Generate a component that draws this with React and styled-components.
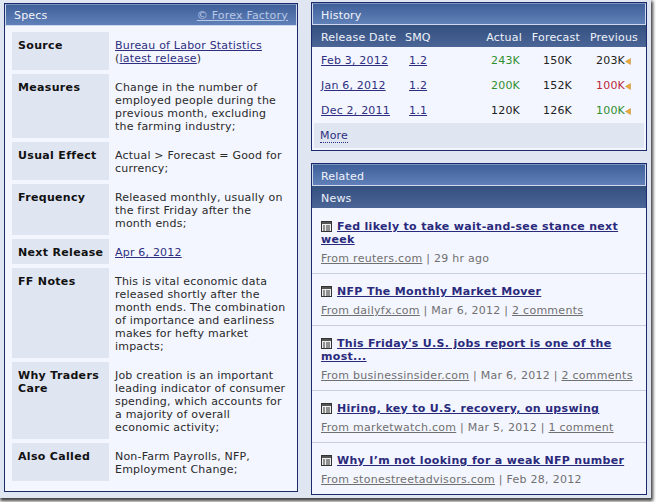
import { Fragment } from "react";
import styled, { createGlobalStyle } from "styled-components";

const GlobalStyle = createGlobalStyle`
    html, body {
        margin: 0;
        padding: 0;
        background: #fff;
    }
    body {
        font-family: "DejaVu Sans", Verdana, sans-serif;
        font-size: 11px;
        line-height: 13px;
        letter-spacing: 0.2px;
        color: #222;
        overflow: hidden;
    }
`

const Frame = styled.div`
    width: 656px;
    height: 502px;
    background: #fff;
    overflow: hidden;
`

const Page = styled.div`
    width: 651px;
    height: 498px;
    box-sizing: border-box;
    padding: 2px 0 0 4px;
    background: #e0e5f2;
    box-shadow: 1px 2px 3px 1px rgba(30, 30, 30, 0.85);
    display: grid;
    grid-template-columns: 294px 336px;
    column-gap: 13px;
    align-items: start;
`

const Column = styled.div`
    display: flex;
    flex-direction: column;
    gap: 12px;
`

const Panel = styled.section`
    border: 1px solid #1b2a6b;
    background: #f4f6ff;
    box-sizing: border-box;
    margin-top: ${(p) => p.$offset || "0"};
    overflow: hidden;
`

const PanelHead = styled.div`
    box-sizing: border-box;
    height: 22px;
    padding: ${(p) => (p.$low ? "2px" : "0")} 8px 0 8px;
    display: flex;
    justify-content: space-between;
    align-items: center;
    color: #f1f4fb;
    background: linear-gradient(#40609a, #6080b8);
    border: 1px solid #cfd8ec;
    border-top-color: #7a92bf;
`

const HeadLink = styled.a`
    color: #b8c8e6;
    text-decoration: underline;
`

const SubHead = styled.div`
    box-sizing: border-box;
    height: 22px;
    padding: 2px 8px 0 9px;
    display: flex;
    align-items: center;
    color: #eef2fa;
    background: linear-gradient(#34507f, #4a6596);
`

const SpecGrid = styled.div`
    padding: 6px 7px 10px 7px;
    display: grid;
    grid-template-columns: 97px 1fr;
    row-gap: 4px;
`

const SpecLabel = styled.div`
    background: #e0e5f2;
    padding: 7px 0 5px 6px;
    font-weight: bold;
    letter-spacing: 0.33px;
    color: #111;
    white-space: nowrap;
`

const SpecValue = styled.div`
    padding: 7px 6px 5px 6px;
    color: #2a2a2a;
    white-space: nowrap;
`

const TextLink = styled.a`
    color: #2e2f80;
    text-decoration: underline;
`

const HistoryHead = styled(SubHead)`
    display: grid;
    grid-template-columns: 84px 40px 1fr 58px 58px;
`

const HeadCell = styled.div`
    text-align: ${(p) => p.$align || "left"};
    white-space: nowrap;
`

const HistoryBody = styled.div`
    padding-top: 1px;
`

const HistoryRow = styled.div`
    height: 25px;
    padding: 0 8px 0 9px;
    display: grid;
    grid-template-columns: 88px 36px 1fr 60px 57px;
    align-items: center;
`

const Cell = styled.div`
    text-align: ${(p) => p.$align || "left"};
    white-space: nowrap;
    color: ${(p) => p.$color || "#222"};
    padding-right: ${(p) => p.$pr || "0"};
`

const Revised = styled.svg`
    width: 6px;
    height: 7px;
    vertical-align: -1px;
`

const MoreBar = styled.div`
    margin: 0 2px 2px 2px;
    height: 25px;
    padding: 0 6px;
    display: flex;
    align-items: center;
    background: #e0e5f2;
`

const MoreLink = styled.a`
    color: #2e2f80;
    text-decoration: none;
    border-bottom: 1px dotted #2e2f80;
`

const NewsItem = styled.div`
    padding: 11px 8px 8px 9px;
    border-top: 1px solid ${(p) => (p.$first ? "transparent" : "#c8cfe2")};
`

const NewsTitle = styled.a`
    color: #2a2a7c;
    font-weight: bold;
    letter-spacing: 0.32px;
    text-decoration: underline;
`

const NewsMeta = styled.div`
    margin-top: 6px;
    color: #707070;
    letter-spacing: 0.27px;
`

const MetaLink = styled.a`
    color: #707070;
    text-decoration: underline;
`

const NewsGlyph = styled.svg`
    width: 11px;
    height: 11px;
    margin-right: 5px;
    vertical-align: -2px;
`

const specs = [
    { label: "Source", value: <><TextLink>Bureau of Labor Statistics</TextLink><br />(<TextLink>latest release</TextLink>)</> },
    { label: "Measures", value: <>Change in the number of<br />employed people during the<br />previous month, excluding<br />the farming industry;</> },
    { label: "Usual Effect", value: <>Actual &gt; Forecast = Good for<br />currency;</> },
    { label: "Frequency", value: <>Released monthly, usually on<br />the first Friday after the<br />month ends;</> },
    { label: "Next Release", value: <TextLink>Apr 6, 2012</TextLink> },
    { label: "FF Notes", value: <>This is vital economic data<br />released shortly after the<br />month ends. The combination<br />of importance and earliness<br />makes for hefty market<br />impacts;</> },
    { label: <>Why Traders<br />Care</>, value: <>Job creation is an important<br />leading indicator of consumer<br />spending, which accounts for<br />a majority of overall<br />economic activity;</> },
    { label: "Also Called", value: <>Non-Farm Payrolls, NFP,<br />Employment Change;</> },
];

const GREEN = "#2f8f2f";
const RED = "#b8283c";

const history = [
    { date: "Feb 3, 2012", smq: "1.2", actual: "243K", actualColor: GREEN, forecast: "150K", previous: "203K" },
    { date: "Jan 6, 2012", smq: "1.2", actual: "200K", actualColor: GREEN, forecast: "152K", previous: "100K", previousColor: RED },
    { date: "Dec 2, 2011", smq: "1.1", actual: "120K", forecast: "126K", previous: "100K", previousColor: GREEN },
];

const news = [
    { title: "Fed likely to take wait-and-see stance next week", from: "From reuters.com", rest: " | 29 hr ago" },
    { title: "NFP The Monthly Market Mover", from: "From dailyfx.com", rest: " | Mar 6, 2012 | ", comments: "2 comments" },
    { title: "This Friday's U.S. jobs report is one of the most...", from: "From businessinsider.com", rest: " | Mar 6, 2012 | ", comments: "2 comments" },
    { title: "Hiring, key to U.S. recovery, on upswing", from: "From marketwatch.com", rest: " | Mar 5, 2012 | ", comments: "1 comment" },
    { title: "Why I’m not looking for a weak NFP number", from: "From stonestreetadvisors.com", rest: " | Feb 28, 2012" },
];

const NewsIcon = () => (
    <NewsGlyph viewBox="0 0 11 11">
        <rect x="0.5" y="0.5" width="10" height="10" fill="#eee" stroke="#333" />
        <rect x="1" y="1" width="9" height="2" fill="#555" />
        <path d="M2 5h2M2 7h2M2 9h2M5 5h4M5 7h4M5 9h4" stroke="#333" strokeWidth="1" />
    </NewsGlyph>
);

const RevisedIcon = () => (
    <Revised viewBox="0 0 6 7">
        <path d="M5.5 0.5V6.5L0.5 3.5Z" fill="#e8a93a" stroke="#c98f2a" strokeWidth="0.5" />
    </Revised>
);

const App = () => {
    return (
        <>
            <GlobalStyle />
            <Frame>
                <Page>
                    <Panel $offset="1px">
                        <PanelHead>
                            <span>Specs</span>
                            <HeadLink>© Forex Factory</HeadLink>
                        </PanelHead>
                        <SpecGrid>
                            {specs.map((s, i) => (
                                <Fragment key={i}>
                                    <SpecLabel>{s.label}</SpecLabel>
                                    <SpecValue>{s.value}</SpecValue>
                                </Fragment>
                            ))}
                        </SpecGrid>
                    </Panel>
                    <Column>
                        <Panel>
                            <PanelHead $low>History</PanelHead>
                            <HistoryHead>
                                <HeadCell>Release Date</HeadCell>
                                <HeadCell>SMQ</HeadCell>
                                <HeadCell $align="right">Actual</HeadCell>
                                <HeadCell $align="right">Forecast</HeadCell>
                                <HeadCell $align="right">Previous</HeadCell>
                            </HistoryHead>
                            <HistoryBody>
                                {history.map((h) => (
                                    <HistoryRow key={h.date}>
                                        <Cell><TextLink>{h.date}</TextLink></Cell>
                                        <Cell><TextLink>{h.smq}</TextLink></Cell>
                                        <Cell $align="right" $color={h.actualColor} $pr="1px">{h.actual}</Cell>
                                        <Cell $align="right" $pr="9px">{h.forecast}</Cell>
                                        <Cell $align="right" $color={h.previousColor} $pr="7px">{h.previous}<RevisedIcon /></Cell>
                                    </HistoryRow>
                                ))}
                            </HistoryBody>
                            <MoreBar><MoreLink>More</MoreLink></MoreBar>
                        </Panel>
                        <Panel>
                            <PanelHead $low>Related</PanelHead>
                            <SubHead>News</SubHead>
                            {news.map((n, i) => (
                                <NewsItem key={n.title} $first={i === 0}>
                                    <div><NewsIcon /><NewsTitle>{n.title}</NewsTitle></div>
                                    <NewsMeta>
                                        <MetaLink>{n.from}</MetaLink>{n.rest}
                                        {n.comments && <MetaLink>{n.comments}</MetaLink>}
                                    </NewsMeta>
                                </NewsItem>
                            ))}
                        </Panel>
                    </Column>
                </Page>
            </Frame>
        </>
    );
};

export default App;
